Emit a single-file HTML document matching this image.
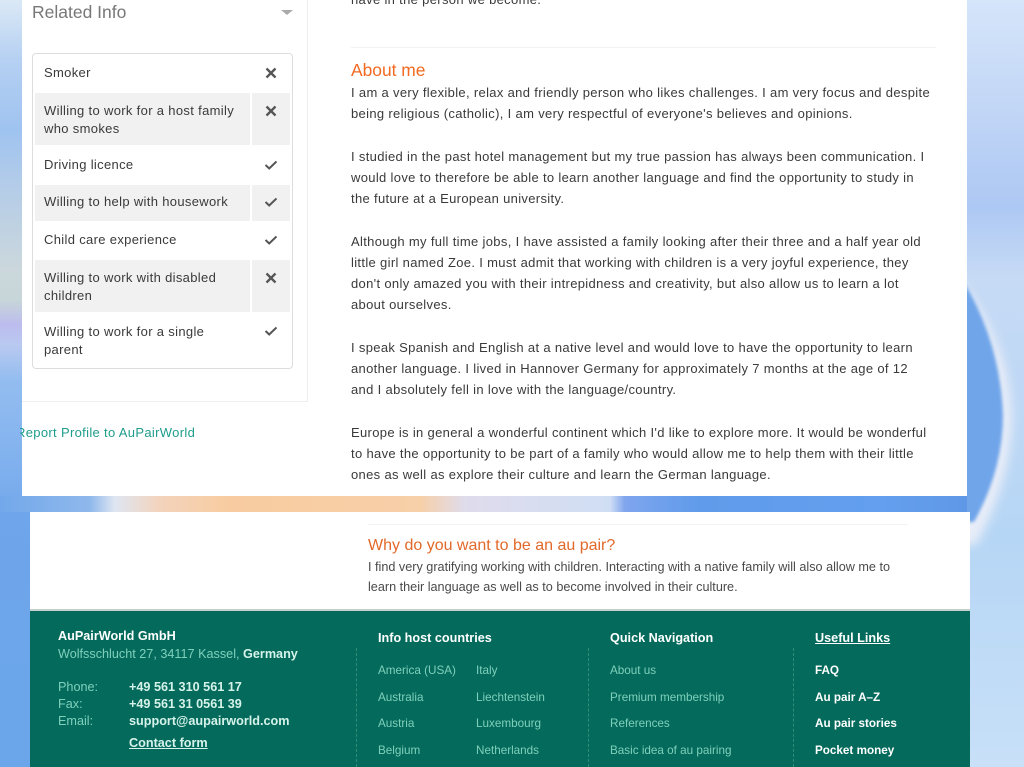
<!DOCTYPE html>
<html>
<head>
<meta charset="utf-8">
<style>
html,body{margin:0;padding:0;width:1024px;height:767px;overflow:hidden;background:#8fb8ee}
body{position:relative;font-family:"Liberation Sans",sans-serif}
.a{position:absolute}
.t{position:absolute;white-space:nowrap;font-size:13px;letter-spacing:.33px;line-height:18px;color:#3a3a3a}
.g{position:absolute;background:#f1f1f1}
.o{position:absolute;white-space:nowrap;font-size:17.4px;line-height:20px;color:#f26a21}
.f{position:absolute;white-space:nowrap;font-size:11.7px;line-height:16px;color:#7fd0bb}
.h{font-size:12.65px}
.b{font-weight:bold;color:#d6f3ea}
.w{font-weight:bold;color:#fff}
svg.i{position:absolute;width:12px;height:12px}
.dash{position:absolute;top:648px;height:119px;border-left:1px dashed #2f8d79}
</style>
</head>
<body>
<!-- background -->
<div class="a" style="left:0;top:0;width:22px;height:512px;background:linear-gradient(180deg,#dbe9f6 0,#b5d0f2 60px,#9fc3f0 130px,#b5cde8 190px,#cbd7dc 270px,#c7d6d8 300px,#bcbcee 325px,#b9c9f0 345px,#93bdf0 380px,#7fb0ee 470px,#74a8ea 512px)"></div>
<div class="a" style="left:0;top:512px;width:30px;height:255px;background:linear-gradient(180deg,#6fa5ea,#6ba6ea)"></div>
<div class="a" style="left:0;top:496px;width:1024px;height:16px;background:linear-gradient(90deg,#72a8ea 0,#8fb8ec 90px,#dfe6f2 115px,#f3d3bc 160px,#f8cca0 230px,#f7cfa8 420px,#dfdcec 465px,#d0def4 610px,#7fa5ee 625px,#5f9bea 700px,#639fee 880px,#5f98e6 967px,#7aaeea 985px,#b8d2f4 1024px)"></div>
<svg class="a" style="left:967px;top:0" width="57" height="767" viewBox="967 0 57 767">
<defs>
<linearGradient id="r" x1="0" y1="0" x2="0" y2="1"><stop offset="0" stop-color="#d5e5fa"/><stop offset=".14" stop-color="#c2d6f6"/><stop offset=".27" stop-color="#adc8f4"/><stop offset=".36" stop-color="#c6daf5"/><stop offset=".7" stop-color="#b6d6f5"/><stop offset="1" stop-color="#c8e0f8"/></linearGradient>
<filter id="bl" x="-30%" y="-10%" width="160%" height="120%"><feGaussianBlur stdDeviation="1.5"/></filter>
<filter id="bl2" x="-50%" y="-10%" width="200%" height="120%"><feGaussianBlur stdDeviation="5"/></filter>
</defs>
<rect x="967" y="0" width="57" height="767" fill="url(#r)"/>
<path d="M945 262 Q1008 330 1012 415 Q1012 480 976 545 L945 545Z" fill="#e8edf8" filter="url(#bl2)"/>
<path d="M955 268 Q1000 335 1003 415 Q1003 470 974 522 L950 522Z" fill="#6fa5ea" filter="url(#bl)"/>
</svg>

<!-- upper white panel -->
<div class="a" style="left:22px;top:0;width:945px;height:496px;background:#fff"></div>
<div class="a" style="left:22px;top:401px;width:286px;height:1px;background:#eeeeee"></div>
<div class="a" style="left:307px;top:0;width:1px;height:402px;background:#eeeeee"></div>

<div class="t" style="left:32px;top:2px;font-size:17.5px;letter-spacing:0;line-height:20px;color:#777">Related Info</div>
<div class="a" style="left:281px;top:10px;width:0;height:0;border-left:6px solid transparent;border-right:6px solid transparent;border-top:5px solid #aaa"></div>

<!-- table -->
<div class="a" style="left:32px;top:53px;width:259px;height:314px;border:1px solid #ddd;border-radius:4px;background:#fff"></div>
<div class="g" style="left:35px;top:93px;width:215px;height:52px"></div>
<div class="g" style="left:252px;top:93px;width:38px;height:52px"></div>
<div class="g" style="left:35px;top:185px;width:215px;height:36px"></div>
<div class="g" style="left:252px;top:185px;width:38px;height:36px"></div>
<div class="g" style="left:35px;top:260px;width:215px;height:52px"></div>
<div class="g" style="left:252px;top:260px;width:38px;height:52px"></div>

<div class="t" style="left:44px;top:64px">Smoker</div>
<div class="t" style="left:44px;top:102px">Willing to work for a host family<br>who smokes</div>
<div class="t" style="left:44px;top:156px">Driving licence</div>
<div class="t" style="left:44px;top:193px">Willing to help with housework</div>
<div class="t" style="left:44px;top:231px">Child care experience</div>
<div class="t" style="left:44px;top:269px">Willing to work with disabled<br>children</div>
<div class="t" style="left:44px;top:323px">Willing to work for a single<br>parent</div>

<svg class="i" style="left:265px;top:67px" viewBox="0 0 12 12"><path d="M1.5 1.5L10.5 10.5M10.5 1.5L1.5 10.5" stroke="#555" stroke-width="2.3" fill="none"/></svg>
<svg class="i" style="left:265px;top:105px" viewBox="0 0 12 12"><path d="M1.5 1.5L10.5 10.5M10.5 1.5L1.5 10.5" stroke="#555" stroke-width="2.3" fill="none"/></svg>
<svg class="i" style="left:265px;top:159px" viewBox="0 0 12 12"><path d="M.5 6L4.2 9.5L11.5 2.5" stroke="#555" stroke-width="2" fill="none"/></svg>
<svg class="i" style="left:265px;top:196px" viewBox="0 0 12 12"><path d="M.5 6L4.2 9.5L11.5 2.5" stroke="#555" stroke-width="2" fill="none"/></svg>
<svg class="i" style="left:265px;top:234px" viewBox="0 0 12 12"><path d="M.5 6L4.2 9.5L11.5 2.5" stroke="#555" stroke-width="2" fill="none"/></svg>
<svg class="i" style="left:265px;top:272px" viewBox="0 0 12 12"><path d="M1.5 1.5L10.5 10.5M10.5 1.5L1.5 10.5" stroke="#555" stroke-width="2.3" fill="none"/></svg>
<svg class="i" style="left:265px;top:325px" viewBox="0 0 12 12"><path d="M.5 6L4.2 9.5L11.5 2.5" stroke="#555" stroke-width="2" fill="none"/></svg>

<div class="a" style="left:20px;top:424px;width:200px;height:18px;overflow:hidden"><div class="t" style="left:-4px;top:0;color:#1f9c8c">Report Profile to AuPairWorld</div></div>

<!-- about me -->
<div class="t" style="left:351px;top:-9px">have in the person we become.</div>
<div class="a" style="left:351px;top:47px;width:585px;height:1px;background:#f2f2f2"></div>
<div class="o" style="left:351px;top:60px">About me</div>
<div class="t" style="left:351px;top:84px">I am a very flexible, relax and friendly person who likes challenges. I am very focus and despite</div>
<div class="t" style="left:351px;top:105px">being religious (catholic), I am very respectful of everyone's believes and opinions.</div>
<div class="t" style="left:351px;top:148px">I studied in the past hotel management but my true passion has always been communication. I</div>
<div class="t" style="left:351px;top:169px">would love to therefore be able to learn another language and find the opportunity to study in</div>
<div class="t" style="left:351px;top:190px">the future at a European university.</div>
<div class="t" style="left:351px;top:233px">Although my full time jobs, I have assisted a family looking after their three and a half year old</div>
<div class="t" style="left:351px;top:254px">little girl named Zoe. I must admit that working with children is a very joyful experience, they</div>
<div class="t" style="left:351px;top:275px">don't only amazed you with their intrepidness and creativity, but also allow us to learn a lot</div>
<div class="t" style="left:351px;top:296px">about ourselves.</div>
<div class="t" style="left:351px;top:339px">I speak Spanish and English at a native level and would love to have the opportunity to learn</div>
<div class="t" style="left:351px;top:360px">another language. I lived in Hannover Germany for approximately 7 months at the age of 12</div>
<div class="t" style="left:351px;top:381px">and I absolutely fell in love with the language/country.</div>
<div class="t" style="left:351px;top:424px">Europe is in general a wonderful continent which I'd like to explore more. It would be wonderful</div>
<div class="t" style="left:351px;top:445px">to have the opportunity to be part of a family who would allow me to help them with their little</div>
<div class="t" style="left:351px;top:466px">ones as well as explore their culture and learn the German language.</div>

<!-- lower white panel -->
<div class="a" style="left:30px;top:512px;width:940px;height:98px;background:#fff"></div>
<div class="a" style="left:368px;top:524px;width:540px;height:1px;background:#f2f2f2"></div>
<div class="o" style="left:368px;top:536px;font-size:16px;color:#e2682a">Why do you want to be an au pair?</div>
<div class="t" style="left:368px;top:558px;font-size:12.65px;letter-spacing:0;color:#4a4a4a">I find very gratifying working with children. Interacting with a native family will also allow me to</div>
<div class="t" style="left:368px;top:578px;font-size:12.65px;letter-spacing:0;color:#4a4a4a">learn their language as well as to become involved in their culture.</div>

<!-- footer -->
<div class="a" style="left:30px;top:610px;width:940px;height:157px;background:#046a5c"></div>
<div class="a" style="left:30px;top:609px;width:940px;height:2px;background:#c8cfcc"></div>
<div class="dash" style="left:356px"></div>
<div class="dash" style="left:588px"></div>
<div class="dash" style="left:793px"></div>

<div class="f w h" style="left:58px;top:628px">AuPairWorld GmbH</div>
<div class="f h" style="left:58px;top:646px">Wolfsschlucht 27, 34117 Kassel, <span class="b">Germany</span></div>
<div class="f h" style="left:58px;top:679px">Phone:</div>
<div class="f h" style="left:58px;top:696px">Fax:</div>
<div class="f h" style="left:58px;top:713px">Email:</div>
<div class="f b h" style="left:129px;top:679px">+49 561 310 561 17</div>
<div class="f b h" style="left:129px;top:696px">+49 561 31 0561 39</div>
<div class="f b h" style="left:129px;top:713px">support@aupairworld.com</div>
<div class="f b h" style="left:129px;top:735px;text-decoration:underline">Contact form</div>

<div class="f w h" style="left:378px;top:630px">Info host countries</div>
<div class="f" style="left:378px;top:663px">America (USA)</div>
<div class="f" style="left:378px;top:690px">Australia</div>
<div class="f" style="left:378px;top:716px">Austria</div>
<div class="f" style="left:378px;top:743px">Belgium</div>
<div class="f" style="left:476px;top:663px">Italy</div>
<div class="f" style="left:476px;top:690px">Liechtenstein</div>
<div class="f" style="left:476px;top:716px">Luxembourg</div>
<div class="f" style="left:476px;top:743px">Netherlands</div>

<div class="f w h" style="left:610px;top:630px">Quick Navigation</div>
<div class="f" style="left:610px;top:663px">About us</div>
<div class="f" style="left:610px;top:690px">Premium membership</div>
<div class="f" style="left:610px;top:716px">References</div>
<div class="f" style="left:610px;top:743px">Basic idea of au pairing</div>

<div class="f w h" style="left:815px;top:630px;text-decoration:underline">Useful Links</div>
<div class="f w" style="left:815px;top:663px">FAQ</div>
<div class="f w" style="left:815px;top:690px">Au pair A–Z</div>
<div class="f w" style="left:815px;top:716px">Au pair stories</div>
<div class="f w" style="left:815px;top:743px">Pocket money</div>
</body>
</html>
